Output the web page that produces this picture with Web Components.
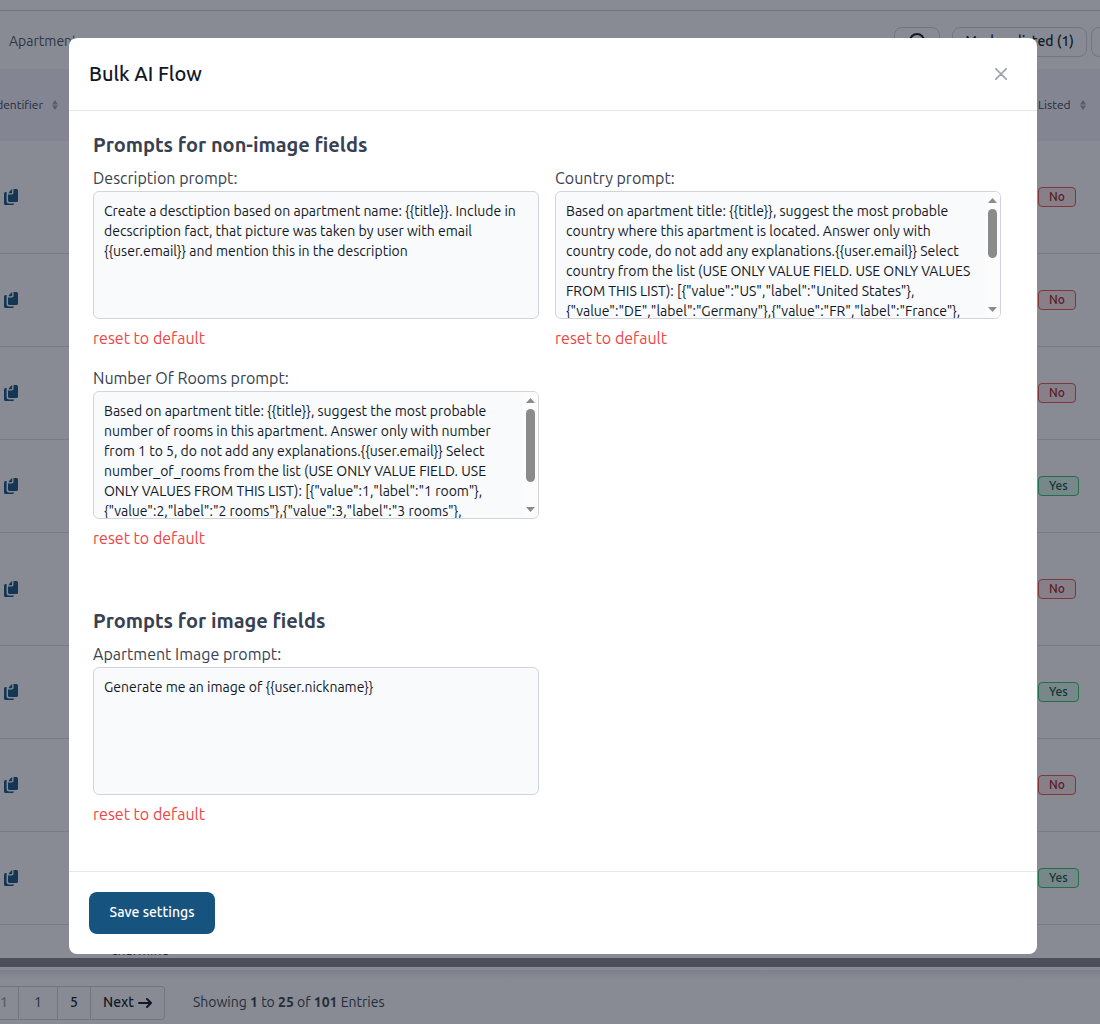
<!DOCTYPE html>
<html lang="en">
<head>
<meta charset="utf-8">
<meta name="viewport" content="width=device-width, initial-scale=1">
<title>Bulk AI Flow</title>
<style>
    :root {
        --gray-50: #f9fafb;
        --gray-200: #e5e7eb;
        --gray-300: #d1d5db;
        --gray-400: #9ca3af;
        --gray-600: #4b5563;
        --gray-700: #374151;
        --gray-900: #111827;
        --primary: #17537f;
        --danger: #ef4444;
    }
    body {
        margin: 0;
        background: white;
        color: var(--gray-900);
        font: 14px/20px Ubuntu, Lato, "Open Sans", sans-serif;
    }
</style>
</head>
<body>
<admin-page></admin-page>
<modal-dialog heading="Bulk AI Flow">
    <prompt-section heading="Prompts for non-image fields">
        <prompt-field label="Description">Create a desctiption based on apartment name: {{title}}. Include in decscription fact, that picture was taken by user with email {{user.email}} and mention this in the description</prompt-field>
        <prompt-field label="Country">Based on apartment title: {{title}}, suggest the most probable country where this apartment is located. Answer only with country code, do not add any explanations.{{user.email}} Select country from the list (USE ONLY VALUE FIELD. USE ONLY VALUES FROM THIS LIST): [{"value":"US","label":"United States"},{"value":"DE","label":"Germany"},{"value":"FR","label":"France"},{"value":"GB","label":"United Kingdom"},{"value":"NL","label":"Netherlands"},{"value":"IT","label":"Italy"},{"value":"ES","label":"Spain"},{"value":"DK","label":"Denmark"},{"value":"PL","label":"Poland"},{"value":"UA","label":"Ukraine"},{"value":"CA","label":"Canada"},{"value":"AU","label":"Australia"}]</prompt-field>
        <prompt-field label="Number Of Rooms">Based on apartment title: {{title}}, suggest the most probable number of rooms in this apartment. Answer only with number from 1 to 5, do not add any explanations.{{user.email}} Select number_of_rooms from the list (USE ONLY VALUE FIELD. USE ONLY VALUES FROM THIS LIST): [{"value":1,"label":"1 room"},{"value":2,"label":"2 rooms"},{"value":3,"label":"3 rooms"},{"value":4,"label":"4 rooms"},{"value":5,"label":"5 rooms"}]</prompt-field>
    </prompt-section>
    <prompt-section heading="Prompts for image fields">
        <prompt-field label="Apartment Image">Generate me an image of {{user.nickname}}</prompt-field>
    </prompt-section>
    <save-button slot="footer">Save settings</save-button>
</modal-dialog>

<script>
class SortIcon extends HTMLElement {
    constructor() {
        super();
        this.attachShadow({ mode: 'open' });
        this.shadowRoot.innerHTML = `
            <style>
                :host { display: inline-flex; color: var(--gray-400); }
            </style>
            <svg width="6" height="10" viewBox="0 0 6 10" fill="currentColor" aria-hidden="true">
                <path d="M3 0 6 4.4H0zM3 10 0 5.6h6z"/>
            </svg>
        `;
    }
}
customElements.define('sort-icon', SortIcon);

class CopyButton extends HTMLElement {
    constructor() {
        super();
        this.attachShadow({ mode: 'open' });
        this.shadowRoot.innerHTML = `
            <style>
                :host { display: inline-flex; }
                button {
                    display: flex;
                    padding: 0;
                    border: 0;
                    background: none;
                    color: var(--primary);
                }
            </style>
            <button type="button" aria-label="Copy">
                <svg width="14" height="16" viewBox="0 0 14 16" fill="currentColor" aria-hidden="true">
                    <path d="M9.5 0h3A1.5 1.5 0 0 1 14 1.5v10a1.500 1.500 0 0 1-1.500 1.500h-7A1.500 1.500 0 0 1 4 11.500V5.500h3.800A1.700 1.700 0 0 0 9.500 3.800z"/>
                    <path d="M8.200.2v3.200a.8.800 0 0 1-.8.800H4.600L5 3.300 7.400.5z"/>
                    <path d="M2.600 3v9a2.500 2.500 0 0 0 2.500 2.500h5A1.600 1.600 0 0 1 8.500 16h-7A1.500 1.500 0 0 1 0 14.500v-10A1.500 1.500 0 0 1 1.500 3z"/>
                </svg>
            </button>
        `;
    }
}
customElements.define('copy-button', CopyButton);

class StatusBadge extends HTMLElement {
    constructor() {
        super();
        this.attachShadow({ mode: 'open' });
        this.shadowRoot.innerHTML = `
            <style>
                :host {
                    display: inline-block;
                    padding: 1px 10px;
                    border: 1px solid #f05252;
                    border-radius: 4px;
                    background: #fde8e8;
                    color: #9b1c1c;
                    font-size: 12px;
                    line-height: 16px;
                    font-weight: 500;
                }
                :host([on]) {
                    border-color: #31c46c;
                    background: #def7ec;
                    color: #03543f;
                }
            </style>
            <slot></slot>
        `;
    }
}
customElements.define('status-badge', StatusBadge);

class PageToolbar extends HTMLElement {
    constructor() {
        super();
        this.attachShadow({ mode: 'open' });
        this.shadowRoot.innerHTML = `
            <style>
                :host {
                    display: flex;
                    align-items: center;
                    padding: 16px 0 12px 9px;
                    color: var(--gray-600);
                }
                .title { flex: 1; padding-bottom: 2px; }
                button {
                    box-sizing: border-box;
                    flex: none;
                    display: flex;
                    align-items: center;
                    justify-content: center;
                    height: 30px;
                    margin-right: 12px;
                    padding: 0 12px 2px;
                    border: 1px solid var(--gray-300);
                    border-radius: 8px;
                    background: white;
                    color: var(--gray-900);
                    font: inherit;
                    font-weight: 500;
                }
                .refresh { width: 46px; }
                .mark { min-width: 135px; margin-right: 4px; }
                .more { width: 9px; margin: 0; padding: 0; border-right: 0; border-radius: 8px 0 0 8px; }
            </style>
            <span class="title">Apartments</span>
            <button class="refresh" type="button" aria-label="Refresh">
                <svg width="16" height="16" viewBox="0 0 16 16" fill="none" stroke="currentColor" stroke-width="2" aria-hidden="true">
                    <path d="M15 8A7 7 0 1 1 1 8a7 7 0 0 1 14 0"/>
                </svg>
            </button>
            <button class="mark" type="button">Mark as listed (1)</button>
            <button class="more" type="button" aria-label="More actions"></button>
        `;
    }
}
customElements.define('page-toolbar', PageToolbar);

class RecordsTable extends HTMLElement {
    constructor() {
        super();
        this.attachShadow({ mode: 'open' });
        this.rows = [
            { size: 'tall', listed: false },
            { size: '', listed: false },
            { size: '', listed: false },
            { size: '', listed: true },
            { size: 'tall', listed: false },
            { size: '', listed: true },
            { size: '', listed: false },
            { size: '', listed: true }
        ];
    }

    connectedCallback() {
        this.render();
    }

    render() {
        const rows = this.rows.map(row => `
            <tr class="${row.size}">
                <td><copy-button></copy-button></td>
                <td></td>
                <td><status-badge ${row.listed ? 'on' : ''}>${row.listed ? 'Yes' : 'No'}</status-badge></td>
            </tr>
        `).join('');
        this.shadowRoot.innerHTML = `
            <style>
                :host {
                    display: block;
                    overflow: hidden;
                    border-bottom: 9px solid #87868a;
                }
                table {
                    width: 100%;
                    table-layout: fixed;
                    border-collapse: separate;
                    border-spacing: 0;
                }
                th {
                    box-sizing: border-box;
                    height: 72px;
                    padding: 0;
                    background: #f5f4fc;
                    color: var(--gray-700);
                    font-size: 12px;
                    font-weight: 400;
                    text-align: left;
                }
                td {
                    box-sizing: border-box;
                    height: 93px;
                    padding: 0 0 2px;
                    border-bottom: 1px solid #dddfe4;
                }
                .tall td { height: 113px; }
                td:first-child { padding-left: 4px; }
                th:last-child, td:last-child { width: 62px; }
                .last td {
                    height: 33px;
                    padding: 17px 0 0 11px;
                    border: 0;
                    vertical-align: top;
                    color: var(--gray-700);
                    line-height: 16px;
                }
                .id-col { width: 100px; }
                .head {
                    display: flex;
                    align-items: center;
                    gap: 9px;
                    white-space: nowrap;
                }
                .id-head {
                    width: 58px;
                    justify-content: flex-end;
                }
                copy-button, status-badge { vertical-align: middle; }
            </style>
            <table>
                <thead>
                    <tr>
                        <th class="id-col"><div class="head id-head">Identifier <sort-icon></sort-icon></div></th>
                        <th></th>
                        <th><div class="head">Listed <sort-icon></sort-icon></div></th>
                    </tr>
                </thead>
                <tbody>
                    ${rows}
                    <tr class="last"><td></td><td>charmine</td><td></td></tr>
                </tbody>
            </table>
        `;
    }
}
customElements.define('records-table', RecordsTable);

class TablePager extends HTMLElement {
    constructor() {
        super();
        this.attachShadow({ mode: 'open' });
        this.shadowRoot.innerHTML = `
            <style>
                :host {
                    display: flex;
                    align-items: center;
                    gap: 28px;
                    padding: 16px 0 4px;
                    margin-top: 3px;
                    background: linear-gradient(#e9eaec, white 10px);
                    color: var(--gray-700);
                }
                .pages { display: flex; }
                button, input {
                    box-sizing: border-box;
                    height: 34px;
                    padding: 0 12px 2px;
                    border: 1px solid var(--gray-300);
                    border-left: 0;
                    border-radius: 0;
                    background: white;
                    color: var(--gray-900);
                    font: inherit;
                    font-weight: 500;
                    text-align: center;
                }
                .first { width: 19px; padding: 0 12px 2px 0; color: var(--gray-400); }
                input { width: 39px; color: var(--gray-700); font-weight: 400; }
                .last { width: 33px; }
                .next {
                    display: flex;
                    align-items: center;
                    justify-content: center;
                    gap: 4px;
                    width: 74px;
                    padding: 0 0 2px;
                    border-radius: 0 4px 4px 0;
                }
                .summary { padding-bottom: 2px; }
            </style>
            <div class="pages">
                <button class="first" type="button">1</button>
                <input type="text" aria-label="Page" value="1">
                <button class="last" type="button">5</button>
                <button class="next" type="button">Next
                    <svg width="14" height="12" viewBox="0 0 14 12" fill="none" stroke="currentColor" stroke-width="2" stroke-linecap="round" stroke-linejoin="round" aria-hidden="true">
                        <path d="M1 7h12M9 3l4 4-4 4"/>
                    </svg>
                </button>
            </div>
            <span class="summary">Showing <b>1</b> to <b>25</b> of <b>101</b> Entries</span>
        `;
    }
}
customElements.define('table-pager', TablePager);

class AdminPage extends HTMLElement {
    constructor() {
        super();
        this.attachShadow({ mode: 'open' });
        this.shadowRoot.innerHTML = `
            <style>
                :host { display: block; overflow: hidden; }
                nav { height: 10px; border-bottom: 1px solid var(--gray-300); }
            </style>
            <nav></nav>
            <page-toolbar></page-toolbar>
            <records-table></records-table>
            <table-pager></table-pager>
        `;
    }
}
customElements.define('admin-page', AdminPage);

class SaveButton extends HTMLElement {
    constructor() {
        super();
        this.attachShadow({ mode: 'open' });
        this.shadowRoot.innerHTML = `
            <style>
                :host { display: inline-flex; }
                button {
                    min-width: 126px;
                    padding: 10px 20px 12px;
                    border: 0;
                    border-radius: 8px;
                    background: var(--primary);
                    color: white;
                    font: inherit;
                    font-weight: 500;
                    cursor: pointer;
                }
            </style>
            <button type="button"><slot></slot></button>
        `;
    }
}
customElements.define('save-button', SaveButton);

// Scrollbar for a text area: arrows at both ends and a thumb sized from the content
class ScrollRail extends HTMLElement {
    constructor() {
        super();
        this.attachShadow({ mode: 'open' });
        this.shadowRoot.innerHTML = `
            <style>
                :host {
                    box-sizing: border-box;
                    display: flex;
                    flex-direction: column;
                    align-items: center;
                    width: 15px;
                    padding: 6px 0;
                    gap: 6px;
                    background: #fcfcfc;
                    color: #8b8b8b;
                }
                :host([hidden]) { display: none; }
                svg { flex: none; }
                .track { flex: 1; width: 9px; }
                .thumb {
                    width: 9px;
                    border-radius: 5px;
                    background: currentColor;
                }
            </style>
            <svg width="9" height="5" viewBox="0 0 9 5" fill="currentColor" aria-hidden="true"><path d="M0 5 4.5 0 9 5z"/></svg>
            <div class="track"><div class="thumb"></div></div>
            <svg width="9" height="5" viewBox="0 0 9 5" fill="currentColor" aria-hidden="true"><path d="M0 0 4.5 5 9 0z"/></svg>
        `;
    }

    attachTo(area) {
        this.area = area;
        area.addEventListener('scroll', () => this.update());
        area.addEventListener('input', () => this.refresh());
        window.addEventListener('resize', () => this.refresh());
        this.refresh();
    }

    refresh() {
        this.hidden = true;
        this.hidden = this.area.scrollHeight <= this.area.clientHeight;
        this.update();
    }

    update() {
        if (this.hidden) return;
        const track = this.shadowRoot.querySelector('.track').clientHeight;
        const thumb = this.shadowRoot.querySelector('.thumb');
        const ratio = track / this.area.scrollHeight;
        thumb.style.height = Math.round(this.area.clientHeight * ratio) + 'px';
        thumb.style.marginTop = Math.round(this.area.scrollTop * ratio) + 'px';
    }
}
customElements.define('scroll-rail', ScrollRail);

class PromptField extends HTMLElement {
    constructor() {
        super();
        this.attachShadow({ mode: 'open' });
    }

    connectedCallback() {
        this.shadowRoot.innerHTML = `
            <style>
                :host {
                    display: block;
                    min-width: 0;
                    color: var(--gray-700);
                    font-size: 16px;
                    line-height: 24px;
                }
                label { display: block; margin-bottom: 1px; }
                .box {
                    display: flex;
                    overflow: hidden;
                    border: 1px solid var(--gray-300);
                    border-radius: 6px;
                    background: var(--gray-50);
                }
                .box:focus-within { border-color: var(--primary); }
                textarea {
                    display: block;
                    box-sizing: border-box;
                    flex: 1;
                    min-width: 0;
                    height: 126px;
                    padding: 9px 10px;
                    border: 0;
                    outline: 0;
                    background: none;
                    color: var(--gray-900);
                    font: inherit;
                    font-size: 14px;
                    line-height: 20px;
                    resize: none;
                    scrollbar-width: none;
                }
                button {
                    display: block;
                    margin-top: 7px;
                    padding: 0;
                    border: 0;
                    background: none;
                    color: var(--danger);
                    font: inherit;
                    cursor: pointer;
                }
            </style>
            <label for="prompt">${this.getAttribute('label')} prompt:</label>
            <div class="box">
                <textarea id="prompt"></textarea>
                <scroll-rail></scroll-rail>
            </div>
            <button type="button">reset to default</button>
        `;
        const textarea = this.shadowRoot.querySelector('textarea');
        const rail = this.shadowRoot.querySelector('scroll-rail');
        const initial = this.textContent.trim();
        textarea.value = initial;
        this.shadowRoot.querySelector('button').addEventListener('click', () => {
            textarea.value = initial;
            rail.refresh();
        });
        this.rail = rail;
        this.textarea = textarea;
    }
}
customElements.define('prompt-field', PromptField);

class PromptSection extends HTMLElement {
    constructor() {
        super();
        this.attachShadow({ mode: 'open' });
    }

    connectedCallback() {
        this.shadowRoot.innerHTML = `
            <style>
                :host { display: block; }
                h2 {
                    margin: 0 0 7px;
                    color: var(--gray-700);
                    font-size: 20px;
                    line-height: 28px;
                    font-weight: 600;
                }
                .fields {
                    display: grid;
                    grid-template-columns: 1fr 1fr;
                    gap: 16px;
                }
            </style>
            <h2>${this.getAttribute('heading')}</h2>
            <div class="fields"><slot></slot></div>
        `;
    }
}
customElements.define('prompt-section', PromptSection);

class ModalDialog extends HTMLElement {
    constructor() {
        super();
        this.attachShadow({ mode: 'open' });
    }

    connectedCallback() {
        this.shadowRoot.innerHTML = `
            <style>
                :host {
                    position: fixed;
                    inset: 0;
                    box-sizing: border-box;
                    padding: 38px 63px 0 69px;
                    overflow: auto;
                    background: rgba(17, 24, 39, 0.5);
                }
                .panel {
                    border-radius: 8px;
                    background: white;
                }
                header {
                    display: flex;
                    align-items: center;
                    justify-content: space-between;
                    padding: 20px;
                    border-bottom: 1px solid var(--gray-200);
                }
                h1 {
                    margin: 0;
                    font-size: 20px;
                    line-height: 28px;
                    font-weight: 500;
                }
                .close {
                    display: flex;
                    align-items: center;
                    justify-content: center;
                    width: 32px;
                    height: 32px;
                    padding: 0;
                    border: 0;
                    background: none;
                    color: var(--gray-400);
                    cursor: pointer;
                }
                .content {
                    display: flex;
                    flex-direction: column;
                    gap: 57px;
                    padding: 20px 36px 45px 24px;
                }
                footer {
                    display: flex;
                    padding: 20px;
                    border-top: 1px solid var(--gray-200);
                }
            </style>
            <div class="panel" role="dialog" aria-modal="true" aria-labelledby="heading">
                <header>
                    <h1 id="heading">${this.getAttribute('heading')}</h1>
                    <button class="close" type="button" aria-label="Close">
                        <svg width="12" height="12" viewBox="0 0 14 14" fill="none" stroke="currentColor" stroke-width="2" stroke-linecap="round" stroke-linejoin="round" aria-hidden="true">
                            <path d="m1 1 6 6m0 0 6 6M7 7l6-6M7 7l-6 6"/>
                        </svg>
                    </button>
                </header>
                <div class="content"><slot></slot></div>
                <footer><slot name="footer"></slot></footer>
            </div>
        `;
        this.shadowRoot.querySelector('.close').addEventListener('click', () => this.remove());
    }
}
customElements.define('modal-dialog', ModalDialog);

// The rails measure their text areas, so they start once every element is laid out
document.querySelectorAll('prompt-field').forEach(field => field.rail.attachTo(field.textarea));
</script>
</body>
</html>
